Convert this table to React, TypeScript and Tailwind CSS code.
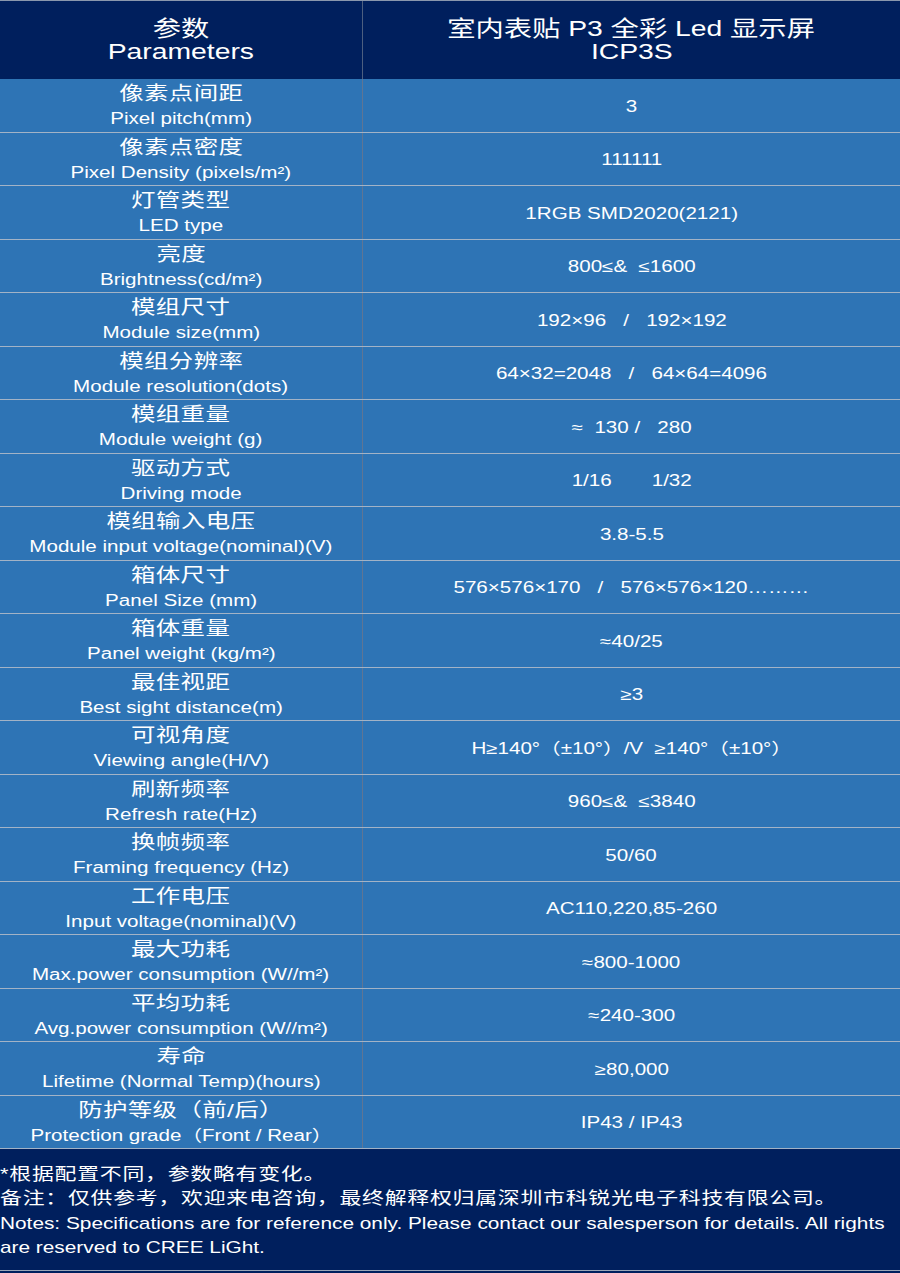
import React from "react";

const rows: [string, string, string][] = [
  ["像素点间距", "Pixel pitch(mm)", "3"],
  ["像素点密度", "Pixel Density (pixels/m²)", "111111"],
  ["灯管类型", "LED type", "1RGB SMD2020(2121)"],
  ["亮度", "Brightness(cd/m²)", "800≤&  ≤1600"],
  ["模组尺寸", "Module size(mm)", "192×96   /   192×192"],
  ["模组分辨率", "Module resolution(dots)", "64×32=2048   /   64×64=4096"],
  ["模组重量", "Module weight (g)", "≈  130 /   280"],
  ["驱动方式", "Driving mode", "1/16       1/32"],
  ["模组输入电压", "Module input voltage(nominal)(V)", "3.8-5.5"],
  ["箱体尺寸", "Panel Size (mm)", "576×576×170   /   576×576×120………"],
  ["箱体重量", "Panel weight (kg/m²)", "≈40/25"],
  ["最佳视距", "Best sight distance(m)", "≥3"],
  ["可视角度", "Viewing angle(H/V)", "H≥140°（±10°）/V  ≥140°（±10°）"],
  ["刷新频率", "Refresh rate(Hz)", "960≤&  ≤3840"],
  ["换帧频率", "Framing frequency (Hz)", "50/60"],
  ["工作电压", "Input voltage(nominal)(V)", "AC110,220,85-260"],
  ["最大功耗", "Max.power consumption (W//m²)", "≈800-1000"],
  ["平均功耗", "Avg.power consumption (W//m²)", "≈240-300"],
  ["寿命", "Lifetime (Normal Temp)(hours)", "≥80,000"],
  ["防护等级（前/后）", "Protection grade（Front / Rear）", "IP43 / IP43"],
];

function S({ children, className = "" }: { children: React.ReactNode; className?: string }) {
  return (
    <span className={"inline-block whitespace-pre scale-x-[1.2857] " + className}>{children}</span>
  );
}

export default function App() {
  return (
    <div
      className="w-[900px] h-[1273px] bg-[#001f5d] text-white overflow-hidden"
      style={{ fontFamily: '"Liberation Sans", "Noto Sans CJK SC", sans-serif' }}
    >
      {/* header */}
      <div className="flex h-[79px] border-t border-[#8a97ad] bg-[#001f5d]">
        <div className="w-[363px] border-r border-[#4d5f80] flex flex-col items-center justify-center text-[22px] leading-[23px]">
          <S>参数</S>
          <S>Parameters</S>
        </div>
        <div className="flex-1 flex flex-col items-center justify-center text-[22px] leading-[23px]">
          <S>室内表贴 P3 全彩 Led 显示屏</S>
          <S>ICP3S</S>
        </div>
      </div>

      {/* rows */}
      <div className="bg-[#2e74b5]">
        {rows.map(([cn, en, v], i) => (
          <div key={i} className="flex h-[53.5px] border-b border-[#a3b3c6]">
            <div className="w-[363px] border-r border-[#5f7594] flex flex-col items-center justify-center pt-[2px]">
              <S className="text-[19px] leading-[25px] tracking-[0.3px]">{cn}</S>
              <S className="text-[16px] leading-[25px]">{en}</S>
            </div>
            <div className="flex-1 flex items-center justify-center pt-[3px]">
              <S className="text-[16px] leading-[20px]">{v}</S>
            </div>
          </div>
        ))}
      </div>

      {/* footer */}
      <div className="h-[122px] border-b border-[#9aa6b8] pt-[14px]">
        <div className="w-[700px] origin-left scale-x-[1.2857] whitespace-nowrap">
          <div className="text-[17px] leading-[24px] tracking-[0.6px]">*根据配置不同，参数略有变化。</div>
          <div className="text-[17px] leading-[24px] tracking-[0.6px]">
            备注：仅供参考，欢迎来电咨询，最终解释权归属深圳市科锐光电子科技有限公司。
          </div>
          <div className="text-[16.2px] leading-[24px]">
            Notes: Specifications are for reference only. Please contact our salesperson for details. All rights
          </div>
          <div className="text-[16.2px] leading-[24px]">are reserved to CREE LiGht.</div>
        </div>
      </div>
    </div>
  );
}
